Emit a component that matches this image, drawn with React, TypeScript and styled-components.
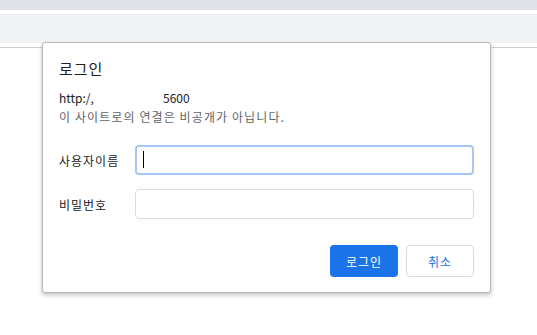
import React from 'react';
import styled, { createGlobalStyle } from 'styled-components';

const GlobalStyle = createGlobalStyle`
  html, body {
    margin: 0;
    padding: 0;
    background: #ffffff;
    font-family: "Noto Sans CJK KR", "Noto Sans", sans-serif;
  }
`;

const Page = styled.div`
  position: relative;
  width: 537px;
  height: 335px;
  overflow: hidden;
  background: #ffffff;
`;

const TabStrip = styled.div`
  height: 10px;
  background: #dee1e6;
  border-bottom: 4px solid #ffffff;
`;

const Toolbar = styled.div`
  height: 28px;
  background: #f1f3f4;
  border-top: 1px solid #e8eaed;
`;

const Divider = styled.div`
  margin-top: 4px;
  height: 1px;
  background: #d0d3d6;
`;

const Dialog = styled.div`
  position: absolute;
  left: 42px;
  top: 42px;
  width: 449px;
  height: 251px;
  box-sizing: border-box;
  background: #ffffff;
  border: 1px solid #b8b8b8;
  border-radius: 3px;
  box-shadow: 0 2px 4px rgba(0, 0, 0, 0.25);
  padding: 14px 16px 0 16px;
  display: flex;
  flex-direction: column;
`;

const Title = styled.div`
  font-size: 15px;
  letter-spacing: 1px;
  color: #202124;
  line-height: 24px;
`;

const Origin = styled.div`
  margin-top: 8px;
  font-size: 12px;
  color: #202124;
  line-height: 18px;
  display: flex;
`;

const Host = styled.span`
  width: 104px;
`;

const Warning = styled.div`
  font-size: 12px;
  letter-spacing: 1.1px;
  color: #5f6368;
  line-height: 19px;
`;

const Form = styled.div`
  margin-top: 19px;
  display: flex;
  flex-direction: column;
  gap: 14px;
`;

const Row = styled.div`
  display: flex;
  align-items: center;
`;

const Label = styled.label`
  width: 76px;
  font-size: 12px;
  letter-spacing: 1px;
  color: #202124;
`;

const Input = styled.div<{ $focused?: boolean }>`
  position: relative;
  flex: 1;
  height: 30px;
  box-sizing: border-box;
  border: ${({ $focused }) => ($focused ? '2px solid #a6c8f7' : '1px solid #dadce0')};
  border-radius: 4px;
`;

const Caret = styled.span`
  position: absolute;
  left: 6px;
  top: 4px;
  width: 1px;
  height: 17px;
  background: #000000;
`;

const Actions = styled.div`
  margin-top: 26px;
  display: flex;
  justify-content: flex-end;
  gap: 8px;
`;

const Button = styled.button<{ $primary?: boolean }>`
  width: 68px;
  height: 32px;
  box-sizing: border-box;
  border-radius: 4px;
  font-family: "Noto Sans CJK KR", "Noto Sans", sans-serif;
  font-size: 12px;
  letter-spacing: 1px;
  cursor: pointer;
  background: ${({ $primary }) => ($primary ? '#1a73e8' : '#ffffff')};
  color: ${({ $primary }) => ($primary ? '#ffffff' : '#1a73e8')};
  border: ${({ $primary }) => ($primary ? 'none' : '1px solid #dadce0')};
`;

export default function App() {
  return (
    <Page>
      <GlobalStyle />
      <TabStrip />
      <Toolbar />
      <Divider />
      <Dialog>
        <Title>로그인</Title>
        <Origin>
          <Host>http:/,</Host>
          <span>5600</span>
        </Origin>
        <Warning>이 사이트로의 연결은 비공개가 아닙니다.</Warning>
        <Form>
          <Row>
            <Label>사용자이름</Label>
            <Input $focused>
              <Caret />
            </Input>
          </Row>
          <Row>
            <Label>비밀번호</Label>
            <Input />
          </Row>
        </Form>
        <Actions>
          <Button $primary>로그인</Button>
          <Button>취소</Button>
        </Actions>
      </Dialog>
    </Page>
  );
}
